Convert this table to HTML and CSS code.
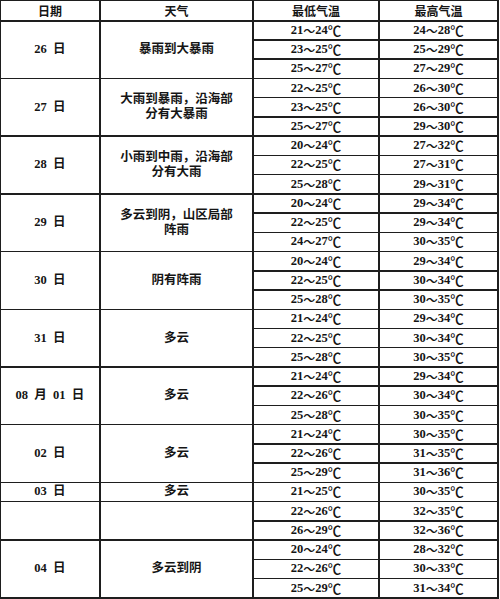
FILE: index.html
```html
<!DOCTYPE html>
<html lang="zh">
<head>
<meta charset="utf-8">
<title>天气预报</title>
<link rel="stylesheet" href="styles.css">
</head>
<body>
<div class="table">
  <div class="cell head">日期</div>
  <div class="cell head">天气</div>
  <div class="cell head">最低气温</div>
  <div class="cell head">最高气温</div>

  <div class="cell span3">26&ensp;日</div>
  <div class="cell span3">暴雨到大暴雨</div>
  <div class="cell">21<i>～</i>24<b>℃</b></div><div class="cell">24<i>～</i>28<b>℃</b></div>
  <div class="cell">23<i>～</i>25<b>℃</b></div><div class="cell">25<i>～</i>29<b>℃</b></div>
  <div class="cell">25<i>～</i>27<b>℃</b></div><div class="cell">27<i>～</i>29<b>℃</b></div>

  <div class="cell span3">27&ensp;日</div>
  <div class="cell span3">大雨到暴雨，沿海部<br>分有大暴雨</div>
  <div class="cell">22<i>～</i>25<b>℃</b></div><div class="cell">26<i>～</i>30<b>℃</b></div>
  <div class="cell">23<i>～</i>25<b>℃</b></div><div class="cell">26<i>～</i>30<b>℃</b></div>
  <div class="cell">25<i>～</i>27<b>℃</b></div><div class="cell">29<i>～</i>30<b>℃</b></div>

  <div class="cell span3">28&ensp;日</div>
  <div class="cell span3">小雨到中雨，沿海部<br>分有大雨</div>
  <div class="cell">20<i>～</i>24<b>℃</b></div><div class="cell">27<i>～</i>32<b>℃</b></div>
  <div class="cell">22<i>～</i>25<b>℃</b></div><div class="cell">27<i>～</i>31<b>℃</b></div>
  <div class="cell">25<i>～</i>28<b>℃</b></div><div class="cell">29<i>～</i>31<b>℃</b></div>

  <div class="cell span3">29&ensp;日</div>
  <div class="cell span3">多云到阴，山区局部<br>阵雨</div>
  <div class="cell">20<i>～</i>24<b>℃</b></div><div class="cell">29<i>～</i>34<b>℃</b></div>
  <div class="cell">22<i>～</i>25<b>℃</b></div><div class="cell">29<i>～</i>34<b>℃</b></div>
  <div class="cell">24<i>～</i>27<b>℃</b></div><div class="cell">30<i>～</i>35<b>℃</b></div>

  <div class="cell span3">30&ensp;日</div>
  <div class="cell span3">阴有阵雨</div>
  <div class="cell">20<i>～</i>24<b>℃</b></div><div class="cell">29<i>～</i>34<b>℃</b></div>
  <div class="cell">22<i>～</i>25<b>℃</b></div><div class="cell">30<i>～</i>34<b>℃</b></div>
  <div class="cell">25<i>～</i>28<b>℃</b></div><div class="cell">30<i>～</i>35<b>℃</b></div>

  <div class="cell span3">31&ensp;日</div>
  <div class="cell span3">多云</div>
  <div class="cell">21<i>～</i>24<b>℃</b></div><div class="cell">29<i>～</i>34<b>℃</b></div>
  <div class="cell">22<i>～</i>25<b>℃</b></div><div class="cell">30<i>～</i>34<b>℃</b></div>
  <div class="cell">25<i>～</i>28<b>℃</b></div><div class="cell">30<i>～</i>35<b>℃</b></div>

  <div class="cell span3">08&ensp;月&ensp;01&ensp;日</div>
  <div class="cell span3">多云</div>
  <div class="cell">21<i>～</i>24<b>℃</b></div><div class="cell">29<i>～</i>34<b>℃</b></div>
  <div class="cell">22<i>～</i>26<b>℃</b></div><div class="cell">30<i>～</i>34<b>℃</b></div>
  <div class="cell">25<i>～</i>28<b>℃</b></div><div class="cell">30<i>～</i>35<b>℃</b></div>

  <div class="cell span3">02&ensp;日</div>
  <div class="cell span3">多云</div>
  <div class="cell">21<i>～</i>24<b>℃</b></div><div class="cell">30<i>～</i>35<b>℃</b></div>
  <div class="cell">22<i>～</i>26<b>℃</b></div><div class="cell">31<i>～</i>35<b>℃</b></div>
  <div class="cell">25<i>～</i>29<b>℃</b></div><div class="cell">31<i>～</i>36<b>℃</b></div>

  <div class="cell">03&ensp;日</div>
  <div class="cell">多云</div>
  <div class="cell">21<i>～</i>25<b>℃</b></div><div class="cell">30<i>～</i>35<b>℃</b></div>

  <div class="cell span2"></div>
  <div class="cell span2"></div>
  <div class="cell">22<i>～</i>26<b>℃</b></div><div class="cell">32<i>～</i>35<b>℃</b></div>
  <div class="cell">26<i>～</i>29<b>℃</b></div><div class="cell">32<i>～</i>36<b>℃</b></div>

  <div class="cell span3">04&ensp;日</div>
  <div class="cell span3">多云到阴</div>
  <div class="cell">20<i>～</i>24<b>℃</b></div><div class="cell">28<i>～</i>32<b>℃</b></div>
  <div class="cell">22<i>～</i>26<b>℃</b></div><div class="cell">30<i>～</i>33<b>℃</b></div>
  <div class="cell">25<i>～</i>29<b>℃</b></div><div class="cell">31<i>～</i>34<b>℃</b></div>
</div>
</body>
</html>
```

FILE: styles.css
```css
html, body {
  margin: 0;
  padding: 0;
  background: #fff;
}

.table {
  box-sizing: border-box;
  width: 499px;
  height: 599px;
  padding: 1px 2px 2px 1px;
  background: #1e1e1e;
  display: grid;
  grid-template-columns: 98px 151px 124px 117px;
  grid-template-rows: 19px repeat(30, 1fr);
  column-gap: 2px;
  row-gap: 1.5px;
  font-family: "Liberation Serif", "Noto Sans CJK SC", serif;
  font-size: 12.5px;
  font-weight: 700;
  color: #151515;
}

.cell {
  background: #fff;
  display: flex;
  align-items: center;
  justify-content: center;
  text-align: center;
  line-height: 15px;
  white-space: pre;
}

.cell i {
  font-style: normal;
  font-weight: 500;
  font-family: "Noto Sans CJK SC", sans-serif;
  font-size: 12px;
}

.cell b {
  font-weight: 500;
  font-family: "Noto Sans CJK SC", sans-serif;
  font-size: 13.5px;
}

.head {
  font-family: "Noto Sans CJK SC", sans-serif;
  font-size: 12px;
}

.span3 {
  grid-row: span 3;
}

.span2 {
  grid-row: span 2;
}
```
